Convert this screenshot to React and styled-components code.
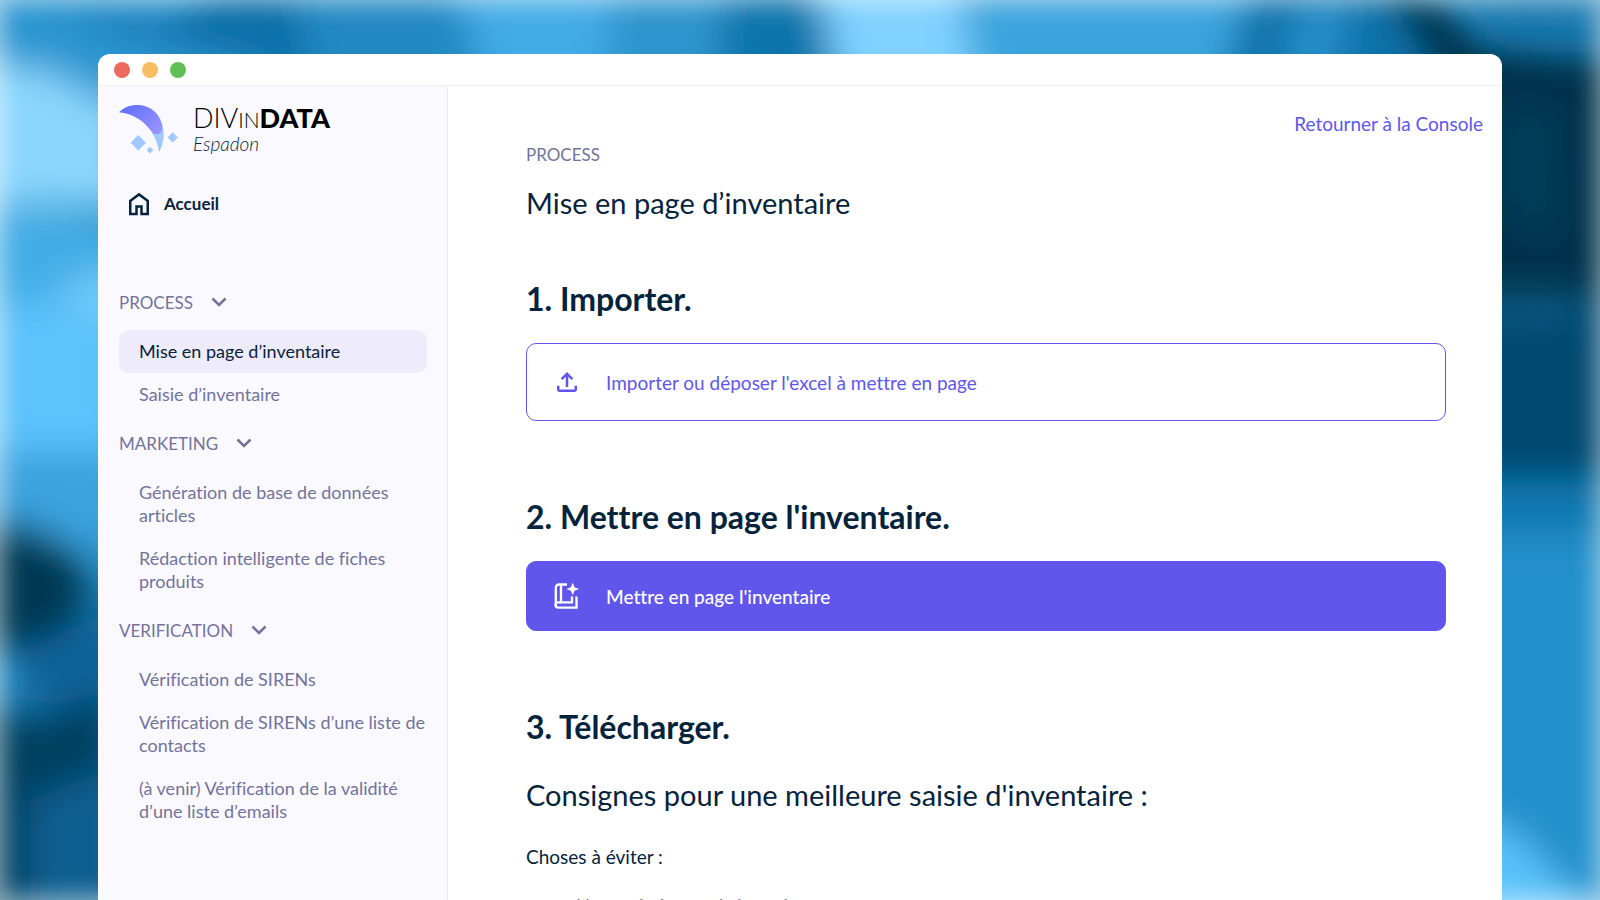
import React from 'react';
import styled, { createGlobalStyle, css } from 'styled-components';

const color = {
  ink: '#05233b',
  muted: '#73739a',
  accent: '#6156eb',
  sidebar: '#faf9ff',
  active: '#edebfc',
  line: '#f0f0f3',
};

const GlobalStyle = createGlobalStyle`
  *, *::before, *::after { box-sizing: border-box; }
  body {
    margin: 0;
    font-family: Lato, "Open Sans", sans-serif;
    font-variant-ligatures: none;
    color: ${color.ink};
  }
  h1, h2, h3, p, ul { margin: 0; padding: 0; font-weight: 400; }
  button { font: inherit; font-variant-ligatures: none; cursor: pointer; }
`;

const Desktop = styled.div`
  position: relative;
  display: flex;
  height: 100vh;
  padding: 54px 98px 0;
  overflow: hidden;
  isolation: isolate;
`;

const Backdrop = styled.div`
  position: absolute;
  inset: 0;
  z-index: -1;
  background: #2388c0;

  svg {
    display: block;
    width: 100%;
    height: 100%;
  }

  &::after {
    content: '';
    position: absolute;
    inset: 0;
    box-shadow: inset 0 0 26px 2px rgba(255, 255, 255, 0.62);
  }
`;

const Window = styled.div`
  flex: 1;
  display: flex;
  flex-direction: column;
  min-width: 0;
  border: 1px solid #fff;
  border-bottom: 0;
  border-radius: 12px 12px 0 0;
  background: #fff;
  overflow: hidden;
`;

const TitleBar = styled.div`
  display: flex;
  flex: none;
  align-items: center;
  gap: 12px;
  height: 31px;
  padding: 0 15px;
  border-bottom: 1px solid ${color.line};
`;

const Dot = styled.span`
  width: 16px;
  height: 16px;
  border-radius: 50%;
  background: ${(p) => p.$color};
`;

const Body = styled.div`
  display: flex;
  flex: 1;
  min-height: 0;
`;

const Sidebar = styled.aside`
  flex: none;
  width: 349px;
  padding: 15px 20px;
  border-right: 1px solid #e9e9ee;
  background: ${color.sidebar};
`;

const Brand = styled.a`
  display: flex;
  align-items: center;
  gap: 14px;
  height: 56px;
  color: #000;
  text-decoration: none;
`;

const BrandText = styled.span`
  display: flex;
  flex-direction: column;
`;

const BrandName = styled.span`
  font-size: 27px;
  line-height: 28px;
  font-weight: 300;

  small {
    font-size: 21px;
    text-transform: uppercase;
  }
  strong { font-weight: 900; }
`;

const BrandProduct = styled.em`
  font-size: 19px;
  line-height: 20px;
  font-weight: 300;
  color: ${color.ink};
`;

const HomeLink = styled.a`
  display: flex;
  align-items: center;
  gap: 10px;
  margin: 32px 0 56px;
  padding-left: 5px;
  font-size: 17px;
  line-height: 30px;
  font-weight: 700;
  color: ${color.ink};
  text-decoration: none;
`;

const GroupToggle = styled.button`
  display: flex;
  align-items: center;
  gap: 18px;
  height: 55px;
  padding: 0;
  border: 0;
  background: none;
  font-size: 17px;
  color: ${color.muted};
`;

const NavList = styled.ul`
  list-style: none;
`;

const NavLink = styled.a`
  display: block;
  padding: 10px 0 10px 20px;
  border-radius: 10px;
  font-size: 18px;
  line-height: 23px;
  color: ${color.muted};
  text-decoration: none;
  ${(p) => p.$active && css`
    background: ${color.active};
    color: ${color.ink};
  `}
`;

const Main = styled.main`
  flex: 1;
  min-width: 0;
  padding: 26px 18px 0 78px;
`;

const TopBar = styled.div`
  display: flex;
  justify-content: flex-end;
`;

const ConsoleLink = styled.a`
  font-size: 19px;
  line-height: 24px;
  color: ${color.accent};
  text-decoration: none;
`;

const Content = styled.div`
  padding: 7px 37px 0 0;
`;

const Eyebrow = styled.p`
  font-size: 17px;
  line-height: 24px;
  color: ${color.muted};
`;

const PageTitle = styled.h1`
  margin-top: 16px;
  font-size: 29px;
  line-height: 40px;
`;

const Step = styled.section`
  padding-top: ${(p) => p.$space}px;
`;

const StepTitle = styled.h2`
  margin-bottom: 24px;
  font-size: 32px;
  line-height: 40px;
  font-weight: 700;
`;

const ActionButton = styled.button`
  display: flex;
  align-items: center;
  gap: 24px;
  width: 100%;
  height: ${(p) => (p.$filled ? 70 : 78)}px;
  padding: 0 25px;
  border: 1px solid ${color.accent};
  border-radius: 10px;
  background: ${(p) => (p.$filled ? color.accent : '#fff')};
  font-size: 19px;
  font-weight: ${(p) => (p.$filled ? 500 : 400)};
  color: ${(p) => (p.$filled ? '#fff' : color.accent)};
`;

const AdviceTitle = styled.h2`
  margin-top: 28px;
  font-size: 29px;
  line-height: 40px;
`;

const AdviceLead = styled.h3`
  margin-top: 30px;
  font-size: 19px;
  line-height: 24px;
`;

const AdviceList = styled.ul`
  margin-top: 24px;
  padding-left: 50px;
  list-style: none;
  font-size: 18px;
  line-height: 24px;
  color: ${color.muted};
`;

const BACKDROP_SHAPES = [
  ['#2c95d0', '-60,-60 300,-60 260,100 120,90 -60,55'],
  ['#0f70a9', '60,10 110,30 310,80 300,-40 240,-40 170,20'],
  ['#2389c3', '280,-60 480,-60 520,90 320,90'],
  ['#43ace7', '440,-60 700,-60 600,90 490,90'],
  ['#2d94cd', '620,-60 730,-60 720,90 600,90'],
  ['#1074ac', '730,-60 805,-60 835,90 715,90'],
  ['#80d2ff', '810,-60 955,-60 975,90 840,90'],
  ['#3aa4de', '965,-60 1260,-60 1230,90 975,90'],
  ['#1072aa', '1260,-60 1390,-60 1430,90 1220,90'],
  ['#2690cb', '1300,0 1350,0 1330,90 1280,90'],
  ['#1478b0', '1430,-60 1660,-60 1660,42 1500,38'],
  ['#8ad6fc', '-60,62 40,68 130,110 130,210 60,205 -60,205'],
  ['#43ade6', '-60,205 60,212 130,235 130,270 60,300 -60,310'],
  ['#75cdfc', '60,285 140,265 140,320 70,320'],
  ['#5bc3fb', '-60,310 60,300 130,320 130,460 -60,450'],
  ['#3aa3de', '-60,450 130,450 130,560 60,540 -60,505'],
  ['#023753', '-60,515 30,525 80,555 90,610 40,650 -60,650'],
  ['#08639a', '20,650 90,620 140,590 140,690 60,705 20,700'],
  ['#004160', '-60,690 30,718 110,690 120,770 30,800 30,960 -60,960'],
  ['#075f91', '30,800 130,760 130,960 30,960'],
  ['#01334b', '1380,-20 1430,-10 1480,44 1660,60 1660,300 1460,300 1440,90'],
  ['#053c5c', '1500,110 1560,110 1550,250 1500,200'],
  ['#034a6f', '1460,310 1560,310 1660,290 1660,480 1460,480'],
  ['#1077b0', '1460,485 1660,485 1660,530 1460,530'],
  ['#2490cb', '1460,540 1660,540 1660,960 1460,960'],
  ['#5ac2fb', '1460,820 1510,830 1590,910 1590,960 1460,960'],
];

function BackdropArt() {
  return (
    <Backdrop aria-hidden="true">
      <svg viewBox="0 0 1600 900" preserveAspectRatio="none">
        <defs>
          <filter id="soften" x="-10%" y="-10%" width="120%" height="120%">
            <feGaussianBlur stdDeviation="18" />
          </filter>
        </defs>
        <g filter="url(#soften)">
          {BACKDROP_SHAPES.map(([fill, points]) => (
            <polygon key={points} fill={fill} points={points} />
          ))}
        </g>
      </svg>
    </Backdrop>
  );
}

function LogoMark() {
  return (
    <svg width="60" height="50" viewBox="0 0 60 50" aria-hidden="true">
      <defs>
        <linearGradient id="fin" x1="12" y1="2" x2="40" y2="30" gradientUnits="userSpaceOnUse">
          <stop offset="0" stopColor="#6673ff" />
          <stop offset="1" stopColor="#9a94fd" />
        </linearGradient>
      </defs>
      <path d="M42.5 18C46.500 28 45 39 40 48.500C39 41 37 35 33 29Z" fill="#a1c9ff" />
      <path d="M0 8.300C5 3 11 1 18 1C32 1 43 11 43 24C43 28.500 41 30 37.500 30C35 30 34 29.500 32.500 27.500C24 16 14 10 0 8.300Z" fill="url(#fin)" />
      <path d="M19.300 31L27 38.700L19.300 46.400L11.600 38.700ZM53.700 28.200L58.900 33.400L53.700 38.600L48.500 33.400ZM31 42.700L34.400 46.100L31 49.500L27.600 46.100Z" fill="#a1c9ff" />
    </svg>
  );
}

function HomeIcon() {
  return (
    <svg width="30" height="30" viewBox="0 0 24 24" fill="currentColor" aria-hidden="true">
      <path d="M6 19h3v-6h6v6h3v-9l-6-4.500L6 10zm-2 2V9l8-6l8 6v12h-7v-6h-2v6z" />
    </svg>
  );
}

function ChevronIcon() {
  return (
    <svg width="16" height="12" viewBox="0 0 16 12" fill="none" stroke="currentColor" strokeWidth="2.500" aria-hidden="true">
      <path d="M1.500 1.500L8 8L14.500 1.500" />
    </svg>
  );
}

function UploadIcon() {
  return (
    <svg width="30" height="30" viewBox="0 0 24 24" fill="currentColor" aria-hidden="true">
      <path d="M11 16V7.850l-2.600 2.600L7 9l5-5l5 5l-1.400 1.450l-2.600-2.600V16zm-5 4q-.825 0-1.412-.587T4 18v-3h2v3h12v-3h2v3q0 .825-.587 1.413T18 20z" />
    </svg>
  );
}

function BookSparkIcon() {
  return (
    <svg width="30" height="30" viewBox="0 0 30 30" fill="none" stroke="currentColor" strokeWidth="2.300" aria-hidden="true">
      <path d="M15 3.500H7a3.200 3.200 0 0 0-3.200 3.200V24.500" />
      <path d="M9 3.500V21.300H20V15.500" />
      <path d="M9 21.300H6.200a2.600 2.600 0 0 0 0 5.300H24.500V15.500" />
      <path d="M20.700 1.800L22.500 6.200L27 8L22.500 9.800L20.700 14.200L18.900 9.800L14.400 8L18.900 6.200Z" fill="currentColor" stroke="none" />
    </svg>
  );
}

const NAV_GROUPS = [
  {
    title: 'PROCESS',
    items: ['Mise en page d’inventaire', 'Saisie d’inventaire'],
  },
  {
    title: 'MARKETING',
    items: ['Génération de base de données articles', 'Rédaction intelligente de fiches produits'],
  },
  {
    title: 'VERIFICATION',
    items: [
      'Vérification de SIRENs',
      'Vérification de SIRENs d’une liste de contacts',
      '(à venir) Vérification de la validité d’une liste d’emails',
    ],
  },
];

const ACTIVE_ITEM = 'Mise en page d’inventaire';

export default function App() {
  return (
    <Desktop>
      <GlobalStyle />
      <BackdropArt />
      <Window>
        <TitleBar>
          <Dot $color="#ed6a5e" />
          <Dot $color="#f8be62" />
          <Dot $color="#61c053" />
        </TitleBar>
        <Body>
          <Sidebar>
            <Brand href="#">
              <LogoMark />
              <BrandText>
                <BrandName>DIV<small>in</small><strong>DATA</strong></BrandName>
                <BrandProduct>Espadon</BrandProduct>
              </BrandText>
            </Brand>
            <HomeLink href="#"><HomeIcon />Accueil</HomeLink>
            <nav>
              {NAV_GROUPS.map((group) => (
                <div key={group.title}>
                  <GroupToggle type="button" aria-expanded="true">
                    {group.title}
                    <ChevronIcon />
                  </GroupToggle>
                  <NavList>
                    {group.items.map((item) => (
                      <li key={item}>
                        <NavLink href="#" $active={item === ACTIVE_ITEM}>{item}</NavLink>
                      </li>
                    ))}
                  </NavList>
                </div>
              ))}
            </nav>
          </Sidebar>
          <Main>
            <TopBar>
              <ConsoleLink href="#">Retourner à la Console</ConsoleLink>
            </TopBar>
            <Content>
              <Eyebrow>PROCESS</Eyebrow>
              <PageTitle>Mise en page d’inventaire</PageTitle>
              <Step $space={56}>
                <StepTitle>1. Importer.</StepTitle>
                <ActionButton type="button"><UploadIcon />Importer ou déposer l'excel à mettre en page</ActionButton>
              </Step>
              <Step $space={76}>
                <StepTitle>2. Mettre en page l'inventaire.</StepTitle>
                <ActionButton type="button" $filled><BookSparkIcon />Mettre en page l'inventaire</ActionButton>
              </Step>
              <Step $space={76}>
                <StepTitle>3. Télécharger.</StepTitle>
                <AdviceTitle>Consignes pour une meilleure saisie d'inventaire :</AdviceTitle>
                <AdviceLead>Choses à éviter :</AdviceLead>
                <AdviceList>
                  <li>Ne pas écrire sur de la couleur</li>
                </AdviceList>
              </Step>
            </Content>
          </Main>
        </Body>
      </Window>
    </Desktop>
  );
}
